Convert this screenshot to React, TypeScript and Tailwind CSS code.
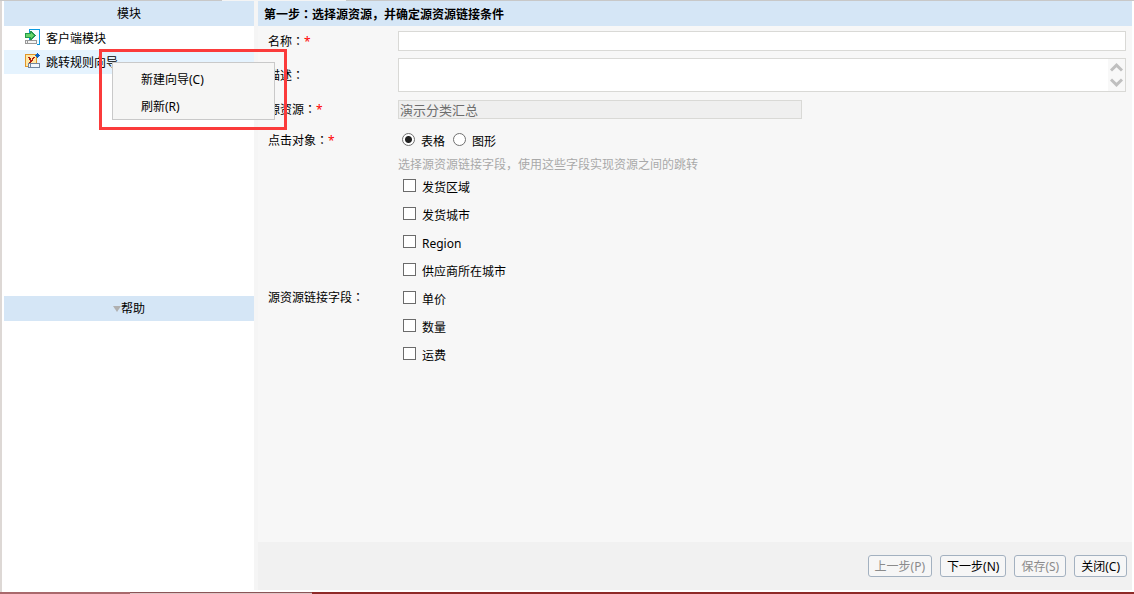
import { useState } from "react";
import type { ReactNode } from "react";

const FIELDS = ["发货区域", "发货城市", "Region", "供应商所在城市", "单价", "数量", "运费"];

const ClientIcon = () => (
  <svg width="16" height="18" viewBox="0 0 16 18" className="mt-[3px] shrink-0" aria-hidden="true">
    <path d="M4 0h11v16H4z" fill="#0c9be0" />
    <path d="M5 1h9v14H5z" fill="#f7fcff" />
    <path d="M0 4h5V2h2v1h1v1h1v1h1v1h1v1h-1v1h-1v1h-1v1H7v1H5V9H0z" fill="#25984a" />
    <path d="M1 5h5V4h1v1h1v1h1v1H8v1H7v1H6V8H1z" fill="#67d468" />
    <path d="M0 11h12v5H0z" fill="#fff" />
    <path d="M0 11h12v4H0z" fill="#999" />
    <path d="M1 12h1v2H1zM3 12h8v2H3z" fill="#f4f4f4" />
  </svg>
);

const RuleIcon = () => (
  <svg width="16" height="18" viewBox="0 0 16 18" className="mt-[3px] shrink-0" aria-hidden="true">
    <path d="M0 1h12v13H0z" fill="#e0952a" />
    <path d="M1 2h10v11H1z" fill="#ffe9a6" />
    <path d="M3 4h2v1h1v2h1V5h1V4h2v1H9v1H8v2H7v1H6v1H4V9h1V7H4V5H3z" fill="#b3200f" />
    <path d="M12 0h1v1h1v1h1v1h-1v1h-1v1h-1V4h-1V3h-1V2h1V1h1z" fill="#0a5fc0" />
    <path d="M3 10h12v5H3z" fill="#7186a0" />
    <path d="M4 11h1v3H4zM6 11h8v3H6z" fill="#f2f7fc" />
  </svg>
);

// full-width colon sits in the middle of its box
const Colon = (): ReactNode => (
  <span lang="zh-TW" className="font-['Noto_Sans_CJK_TC',sans-serif]">：</span>
);

interface LabelProps {
  text: string;
  required?: boolean;
  htmlFor?: string;
  id?: string;
}

const FieldLabel = ({ text, required = false, htmlFor, id }: LabelProps) => {
  const Tag = htmlFor ? "label" : "span";
  return (
    <Tag htmlFor={htmlFor} id={id} className="self-center whitespace-nowrap">
      {text}
      <Colon />
      {required && <span className="text-[#ff0000]">*</span>}
    </Tag>
  );
};

interface FooterButtonProps {
  label: string;
  disabled?: boolean;
}

const FooterButton = ({ label, disabled = false }: FooterButtonProps) => (
  <button
    type="button"
    disabled={disabled}
    className="h-[22px] px-1.5 pt-0.5 rounded-[3px] border border-[#a3b1c0] bg-[#f6f6f6] leading-[18px] whitespace-nowrap disabled:text-[#8b8b8b]"
  >
    {label}
  </button>
);

const Sidebar = () => (
  <aside className="w-[254px] shrink-0 flex flex-col pl-0.5 pb-px border-l-2 border-[#ddd8d5] bg-white">
    <h2 className="h-[25px] bg-[#d5e6f6] text-center leading-[26px]">模块</h2>
    <div className="relative flex-1 basis-0">
      <ul className="leading-[26px]">
        <li className="h-6 pl-[21px] flex items-start gap-[5px]">
          <ClientIcon />
          客户端模块
        </li>
        <li className="h-6 pl-[21px] flex items-start gap-[5px] bg-[#e5f3fe]">
          <RuleIcon />
          跳转规则向导
        </li>
      </ul>
      {/* context menu of the selected node */}
      <div className="absolute left-[95px] top-[23px] z-10 w-[188px] h-[81px] border-3 border-[#fb3b3b] pl-2.5 pt-2.5">
        <div role="menu" className="w-[163px] h-[58px] border border-[#c9c9c9] bg-[#f6f6f5] pt-[3px]">
          <button type="button" role="menuitem" className="block w-full h-[27px] pl-7 text-left">
            新建向导(C)
          </button>
          <button type="button" role="menuitem" className="block w-full h-[27px] pl-7 text-left">
            刷新(R)
          </button>
        </div>
      </div>
    </div>
    <h2 className="h-[25px] bg-[#d5e6f6] flex items-center justify-center">
      <svg width="8" height="6" viewBox="0 0 8 6" aria-hidden="true">
        <path d="M0 0h8L4 6z" fill="#b0b0b0" />
      </svg>
      帮助
    </h2>
    <div className="flex-1 basis-0" />
  </aside>
);

const App = () => {
  const [target, setTarget] = useState("table");

  return (
    <div className="min-h-screen flex flex-col bg-white text-xs text-black font-['Noto_Sans','Noto_Sans_CJK_SC',sans-serif]" lang="zh-CN">
      <div className="h-px flex">
        <div className="w-[222px] bg-[#c8c8c8]" />
        <div className="w-[124px] bg-[#f4f4f4]" />
        <div className="flex-1 bg-[#c8c8c8]" />
      </div>

      <div className="flex-1 flex">
        <Sidebar />
        <main className="flex-1 min-w-0 flex flex-col mr-0.5 mb-0.5 pl-1 bg-[#f5f5f5]">
          <h1 className="h-[25px] pl-1.5 bg-[#d5e6f6] font-bold leading-[25px]">
            第一步<Colon />选择源资源，并确定源资源链接条件
          </h1>

          <form className="flex-1 pl-2.5 pr-1.5 pt-[5px] bg-[#f7f7f7]">
            <div className="grid grid-cols-[130px_1fr]">
              <FieldLabel text="名称" required htmlFor="name" />
              <input id="name" type="text" className="h-5 px-0.5 border border-[#d9d9d6] bg-white" />
            </div>

            <div className="grid grid-cols-[130px_1fr] mt-[7px]">
              <FieldLabel text="描述" htmlFor="desc" />
              <div className="flex h-[34px] border border-[#d9d9d6] bg-white">
                <textarea id="desc" className="flex-1 px-0.5 resize-none overflow-hidden" />
                <div className="w-[17px] flex flex-col items-center justify-between py-1 bg-[#f8f8f8]">
                  <svg width="13" height="9" viewBox="0 0 13 9" aria-hidden="true">
                    <path d="M1 7.5L6.5 2.2L12 7.5" fill="none" stroke="#bfbfbf" strokeWidth="3" />
                  </svg>
                  <svg width="13" height="9" viewBox="0 0 13 9" aria-hidden="true">
                    <path d="M1 1.5L6.5 6.8L12 1.5" fill="none" stroke="#bfbfbf" strokeWidth="3" />
                  </svg>
                </div>
              </div>
            </div>

            <div className="grid grid-cols-[130px_1fr] mt-2">
              <FieldLabel text="源资源" required htmlFor="source" />
              <input
                id="source"
                type="text"
                disabled
                defaultValue="演示分类汇总"
                className="w-[404px] h-[19px] px-px border border-[#d9d9d6] bg-[#efefef] text-[13px] text-[#6d6d6d]"
              />
            </div>

            <div className="grid grid-cols-[130px_1fr] mt-[11px]">
              <FieldLabel text="点击对象" required id="target" />
              <div role="radiogroup" aria-labelledby="target" className="flex gap-2 h-5 pl-1 leading-6">
                {[["table", "表格"], ["chart", "图形"]].map(([value, text]) => (
                  <label key={value} className="flex items-start gap-1.5">
                    <input
                      type="radio"
                      name="target"
                      checked={target === value}
                      onChange={() => setTarget(value)}
                      className="appearance-none mt-[3px] size-[13px] rounded-full border border-[#707070] bg-white checked:bg-[radial-gradient(circle,#222_3px,#fff_4px)]"
                    />
                    {text}
                  </label>
                ))}
              </div>
            </div>

            <div className="grid grid-cols-[130px_1fr] mt-[5px] min-h-[284px]">
              <FieldLabel text="源资源链接字段" id="fields" />
              <div role="group" aria-labelledby="fields">
                <p className="h-5 leading-5 text-[#a9a9a9]">
                  选择源资源链接字段，使用这些字段实现资源之间的跳转
                </p>
                {FIELDS.map((field) => (
                  <label key={field} className="flex items-start gap-1.5 h-7 pl-[5px] leading-[26px]">
                    <input
                      type="checkbox"
                      className="appearance-none mt-1 size-[13px] border border-[#6b6b6b] bg-white checked:bg-[#555]"
                    />
                    {field}
                  </label>
                ))}
              </div>
            </div>
          </form>

          <footer className="h-12 flex items-center justify-end gap-2 pr-[5px] bg-[#f1f1f1]">
            <FooterButton label="上一步(P)" disabled />
            <FooterButton label="下一步(N)" />
            <FooterButton label="保存(S)" disabled />
            <FooterButton label="关闭(C)" />
          </footer>
        </main>
      </div>

      <div className="h-0.5 flex">
        <div className="w-[130px] bg-[#a9696c]" />
        <div className="w-[182px] border-t border-[#8a5557] bg-[#e0c4c5]" />
        <div className="flex-1 bg-[#8f2a28]" />
      </div>
    </div>
  );
};

export default App;
